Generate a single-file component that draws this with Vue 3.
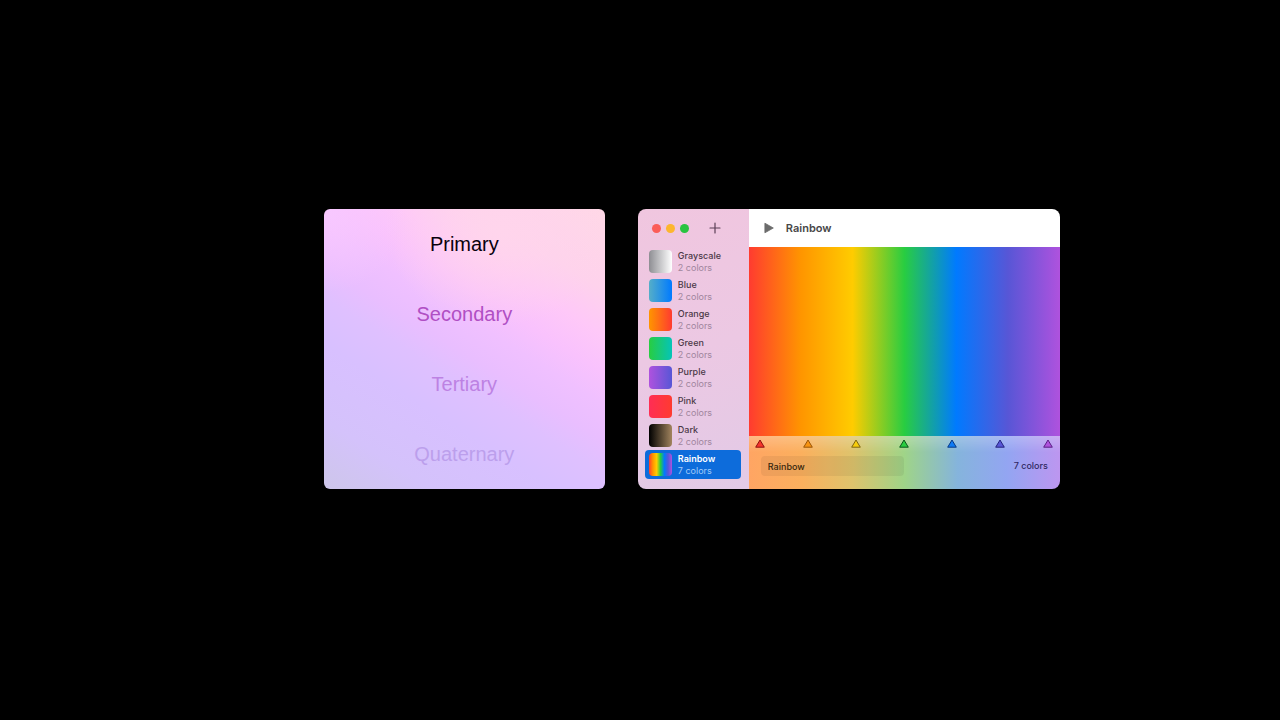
<script setup>
import { ref } from 'vue'

const levels = ['Primary', 'Secondary', 'Tertiary', 'Quaternary']

const rainbow = ['#ff3b30', '#ff9500', '#ffcc00', '#28cd41', '#007aff', '#5856d6', '#af52de']

const gradients = [
  { name: 'Grayscale', colors: ['#8e8e93', '#ffffff'] },
  { name: 'Blue', colors: ['#55aec8', '#007aff'] },
  { name: 'Orange', colors: ['#ff9500', '#ff3b30'] },
  { name: 'Green', colors: ['#28cd41', '#05c4b8'] },
  { name: 'Purple', colors: ['#af52de', '#5856d6'] },
  { name: 'Pink', colors: ['#ff2d55', '#ff3b30'] },
  { name: 'Dark', colors: ['#000000', '#a2845e'] },
  { name: 'Rainbow', colors: rainbow },
]

const markers = [
  { fill: '#f5342b', edge: '#8d1010' },
  { fill: '#f79312', edge: '#9a5407' },
  { fill: '#f7cd0c', edge: '#7d6510' },
  { fill: '#28cd41', edge: '#08591a' },
  { fill: '#0f7bf5', edge: '#073a86' },
  { fill: '#5856d6', edge: '#25237f' },
  { fill: '#af52de', edge: '#5b1f86' },
]

const selected = ref('Rainbow')
const title = ref('Rainbow')
const fill = (colors) => `linear-gradient(90deg, ${colors.join(', ')})`

function select(name) {
  selected.value = name
  title.value = name
}
</script>

<template>
  <main class="stage">
    <section class="levels">
      <p v-for="level in levels" :key="level" :class="['level', level.toLowerCase()]">{{ level }}</p>
    </section>

    <section class="window">
      <aside class="sidebar">
        <div class="titlebar">
          <button class="light close" aria-label="Close"></button>
          <button class="light minimize" aria-label="Minimize"></button>
          <button class="light zoom" aria-label="Zoom"></button>
          <button class="add" aria-label="Add gradient">
            <svg width="12" height="12" viewBox="0 0 12 12">
              <path d="M6 1v10M1 6h10" fill="none" stroke="currentColor" stroke-width="1.2" stroke-linecap="round" />
            </svg>
          </button>
        </div>
        <nav class="list">
          <button
            v-for="item in gradients"
            :key="item.name"
            :class="['item', { active: item.name === selected }]"
            @click="select(item.name)"
          >
            <span class="swatch" :style="{ background: fill(item.colors) }"></span>
            <span class="labels">
              <span class="name">{{ item.name }}</span>
              <span class="count">{{ item.colors.length }} colors</span>
            </span>
          </button>
        </nav>
      </aside>

      <div class="detail">
        <header class="toolbar">
          <button class="play" aria-label="Play">
            <svg width="10" height="12" viewBox="0 0 10 12">
              <path d="M0.9 1.2 9.3 6 0.9 10.8Z" fill="currentColor" stroke="currentColor" stroke-width="0.8" stroke-linejoin="round" />
            </svg>
          </button>
          <h1>{{ selected }}</h1>
        </header>
        <div class="canvas" :style="{ background: fill(rainbow) }"></div>
        <footer class="editor">
          <div class="markers">
            <button v-for="(m, i) in markers" :key="i" class="marker" :aria-label="`Color stop ${i + 1}`">
              <svg width="10" height="9" viewBox="0 0 10 9">
                <path d="M5 1 9.3 8.2H0.7Z" :fill="m.fill" :stroke="m.edge" stroke-width="1" stroke-linejoin="round" />
              </svg>
            </button>
          </div>
          <div class="fields">
            <input v-model="title" type="text" aria-label="Gradient name" />
            <span class="total">7 colors</span>
          </div>
        </footer>
      </div>
    </section>
  </main>
</template>

<style>
body {
  background: #000;
}
</style>

<style scoped>
.stage {
  box-sizing: border-box;
  min-height: 100vh;
  padding: 0 17.2% 22px 25.3%;
  display: flex;
  align-items: center;
  gap: 33px;
  background: #000;
  font-family: Inter, "Liberation Sans", sans-serif;
}

button {
  padding: 0;
  border: 0;
  background: none;
  font: inherit;
  color: inherit;
  text-align: left;
}

svg {
  display: block;
}

.levels {
  flex: 281 1 0;
  border-radius: 6px;
  overflow: hidden;
  background:
    radial-gradient(ellipse 30% 30% at 0% 0%, #f8c8ff 0%, #f3c2ff00 100%),
    radial-gradient(ellipse 40% 34% at 62% 8%, #ffd5ec 0%, #ffd5ec00 100%),
    linear-gradient(212deg, #ffd8e6 0%, #fed2ec 18%, #fec8f8 28%, #f9c2fd 36%, #f0c0ff 43%, #e9beff 51%, #dfc0ff 58%, #d8c0ff 68%, #d4c2fb 85%, #cdc6ea 100%);
}

.level {
  margin: 0;
  height: 70px;
  display: flex;
  align-items: center;
  justify-content: center;
  font-family: "Liberation Sans", Arial, sans-serif;
  font-size: 20px;
  line-height: 24px;
}

.primary {
  color: #08000c;
}

.secondary {
  color: #b04fc4;
}

.tertiary {
  color: #bd82e3;
}

.quaternary {
  color: #bc9fec;
}

.window {
  flex: 422 1 0;
  display: flex;
  border-radius: 8px;
  overflow: hidden;
}

.sidebar {
  box-sizing: border-box;
  flex: 0 0 111px;
  padding: 0 8px 10px 7px;
  background: linear-gradient(165deg, #f0c6df 0%, #ecc8e3 50%, #e2cae6 100%);
}

.titlebar {
  height: 38px;
  padding-left: 7px;
  display: flex;
  align-items: center;
  gap: 5px;
}

.light {
  width: 9px;
  height: 9px;
  border-radius: 50%;
}

.close {
  background: #fb5d58;
}

.minimize {
  background: #fdb62e;
}

.zoom {
  background: #29c440;
}

.add {
  margin-left: 15px;
  color: #5a3f55;
}

.list {
  display: flex;
  flex-direction: column;
}

.item {
  height: 29px;
  padding-left: 4px;
  display: flex;
  align-items: center;
  gap: 6px;
  border-radius: 4px;
  font-size: 9px;
  line-height: 12px;
  color: #4b3947;
}

.swatch {
  flex: none;
  width: 23px;
  height: 23px;
  border-radius: 4px;
}

.labels {
  display: flex;
  flex-direction: column;
}

.name {
  font-weight: 500;
}

.count {
  color: #a0859d;
}

.active {
  background: #0d6cdb;
  color: #fff;
}

.active .name {
  font-weight: 600;
}

.active .count {
  color: #a3cbf8;
}

.detail {
  flex: 1;
  min-width: 0;
  display: flex;
  flex-direction: column;
}

.toolbar {
  height: 38px;
  padding-left: 15px;
  display: flex;
  align-items: center;
  gap: 12px;
  background: #fff;
  color: #6b6b6b;
}

h1 {
  margin: 0;
  font-size: 11px;
  line-height: 14px;
  font-weight: 600;
  color: #474747;
}

.canvas {
  flex: 1;
}

.editor {
  height: 53px;
  background:
    linear-gradient(#ffffff38 0, #ffffff00 16px),
    linear-gradient(90deg, #ffa563 0%, #fbb05e 17%, #dfc36c 33%, #9fd488 50%, #85b4dc 67%, #93a5f2 83%, #bd96f0 100%);
}

.markers {
  padding: 3px 7px 0 6px;
  display: flex;
  justify-content: space-between;
}

.fields {
  padding: 8px 12px 0;
  display: flex;
  align-items: center;
  justify-content: space-between;
}

input {
  box-sizing: border-box;
  width: 50%;
  height: 20px;
  padding: 0 7px;
  border: 0;
  border-radius: 4px;
  outline: 0;
  background: #0000000f;
  font: 9px/12px Inter, "Liberation Sans", sans-serif;
  font-weight: 500;
  color: #36260e;
}

.total {
  font-size: 9px;
  line-height: 12px;
  font-weight: 500;
  color: #302862;
}
</style>
